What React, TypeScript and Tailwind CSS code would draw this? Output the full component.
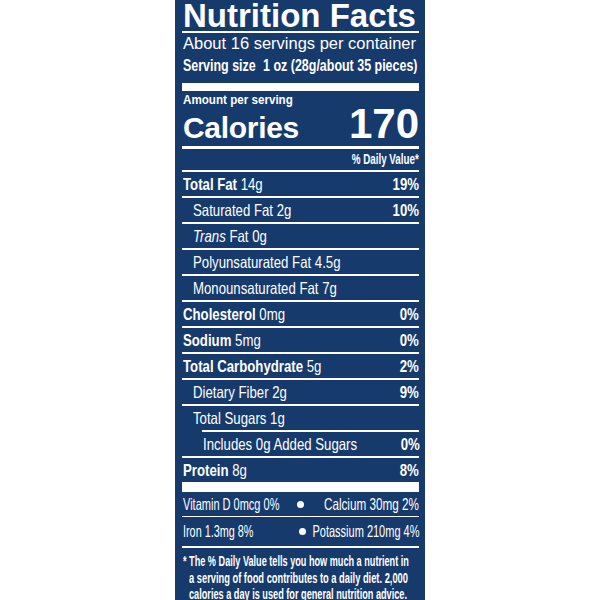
import React from "react";

const sans = "font-['Liberation_Sans',Arial,sans-serif]";

function Line({ h = "h-[2px]", indent = "" }: { h?: string; indent?: string }) {
  return <div className={`${h} ${indent} bg-white shrink-0`} />;
}

function Row({
  children,
  dv,
  indent = "",
}: {
  children: React.ReactNode;
  dv?: string;
  indent?: string;
}) {
  return (
    <div className={`h-[24px] shrink-0 flex items-center justify-between ${sans} text-[16.5px] leading-none whitespace-nowrap`}>
      <div className={indent}>
        <span className="inline-block origin-left scale-x-[0.8]">{children}</span>
      </div>
      {dv && <span className="inline-block origin-right scale-x-[0.8] font-bold">{dv}</span>}
    </div>
  );
}

export default function App() {
  return (
    <div className="w-[600px] h-[600px] bg-white overflow-hidden">
      <div className="ml-[175px] w-[250px] h-[600px] bg-[#173a6c] text-white pl-[7px] pr-[6px] flex flex-col overflow-hidden">
        <div className={`${sans} font-bold text-[33px] leading-[31px] h-[31px] shrink-0 whitespace-nowrap pl-[1px]`}>
          Nutrition Facts
        </div>
        <Line />
        <div className={`${sans} text-[16.5px] leading-[20px] h-[20px] shrink-0 whitespace-nowrap pl-[1px]`}>
          About 16 servings per container
        </div>
        <div className={`${sans} font-bold text-[17px] leading-[22px] h-[30px] shrink-0 pt-[2px] whitespace-nowrap pl-[1px]`}>
          <span className="inline-block origin-left scale-x-[0.733]">
            Serving size<span className="inline-block w-[10px]" />1 oz (28g/about 35 pieces)
          </span>
        </div>
        <Line h="h-[8px]" />
        <div className={`${sans} font-bold text-[12.5px] leading-[16px] h-[16px] shrink-0 pt-[1px] pl-[1px] whitespace-nowrap`}>
          <span className="inline-block origin-left scale-x-[0.93]">Amount per serving</span>
        </div>
        <div className="h-[39px] shrink-0 flex items-baseline justify-between pl-[1px]">
          <span className={`${sans} font-bold text-[30px] leading-[34px] tracking-[-0.3px]`}>Calories</span>
          <span className={`${sans} font-bold text-[42px] leading-[34px]`}>170</span>
        </div>
        <Line h="h-[3px]" />
        <div className={`h-[21px] shrink-0 flex items-center justify-end ${sans} font-bold text-[14px] whitespace-nowrap`}>
          <span className="inline-block origin-right scale-x-[0.7]">% Daily Value*</span>
        </div>
        <Line />
        <Row dv="19%" indent="pl-[1px]">
          <span className="font-bold">Total Fat</span> 14g
        </Row>
        <Line />
        <Row dv="10%" indent="pl-[11px]">Saturated Fat 2g</Row>
        <Line />
        <Row indent="pl-[11px]">
          <span className="italic">Trans</span> Fat 0g
        </Row>
        <Line />
        <Row indent="pl-[11px]">Polyunsaturated Fat 4.5g</Row>
        <Line />
        <Row indent="pl-[11px]">Monounsaturated Fat 7g</Row>
        <Line />
        <Row dv="0%" indent="pl-[1px]">
          <span className="font-bold">Cholesterol</span> 0mg
        </Row>
        <Line />
        <Row dv="0%" indent="pl-[1px]">
          <span className="font-bold">Sodium</span> 5mg
        </Row>
        <Line />
        <Row dv="2%" indent="pl-[1px]">
          <span className="font-bold">Total Carbohydrate</span> 5g
        </Row>
        <Line />
        <Row dv="9%" indent="pl-[11px]">Dietary Fiber 2g</Row>
        <Line />
        <Row indent="pl-[11px]">Total Sugars 1g</Row>
        <Line indent="ml-[20px]" />
        <Row dv="0%" indent="pl-[21px]">Includes 0g Added Sugars</Row>
        <Line />
        <Row dv="8%" indent="pl-[1px]">
          <span className="font-bold">Protein</span> 8g
        </Row>
        <Line h="h-[10px]" />
        <div className={`h-[24px] shrink-0 flex items-center ${sans} text-[16.5px] leading-none whitespace-nowrap pl-[1px]`}>
          <div className="w-[112px] min-w-0 shrink-0">
            <span className="inline-block origin-left scale-x-[0.667]">Vitamin D 0mcg 0%</span>
          </div>
          <div className="w-[10px] shrink-0 flex justify-center">
            <div className="w-[7px] h-[7px] rounded-full bg-white" />
          </div>
          <div className="flex-1 min-w-0 flex justify-end">
            <span className="inline-block shrink-0 origin-right scale-x-[0.709]">Calcium 30mg 2%</span>
          </div>
        </div>
        <Line h="h-[1px]" />
        <div className={`h-[29px] shrink-0 flex items-center ${sans} text-[16.5px] leading-none whitespace-nowrap pl-[1px]`}>
          <div className="w-[114px] min-w-0 shrink-0">
            <span className="inline-block origin-left scale-x-[0.657]">Iron 1.3mg 8%</span>
          </div>
          <div className="w-[10px] shrink-0 flex justify-center">
            <div className="w-[7px] h-[7px] rounded-full bg-white" />
          </div>
          <div className="flex-1 min-w-0 flex justify-end">
            <span className="inline-block shrink-0 origin-right scale-x-[0.667]">Potassium 210mg 4%</span>
          </div>
        </div>
        <Line h="h-[2px]" />
        <div className={`${sans} font-bold text-[15px] leading-[16.5px] pt-[5px] pl-[1px] whitespace-nowrap`}>
          <div className="origin-left scale-x-[0.609]">* The % Daily Value tells you how much a nutrient in</div>
          <div className="pl-[6px]">
            <div className="origin-left scale-x-[0.621]">a serving of food contributes to a daily diet. 2,000</div>
          </div>
          <div className="pl-[6px]">
            <div className="origin-left scale-x-[0.611]">calories a day is used for general nutrition advice.</div>
          </div>
        </div>
      </div>
    </div>
  );
}
